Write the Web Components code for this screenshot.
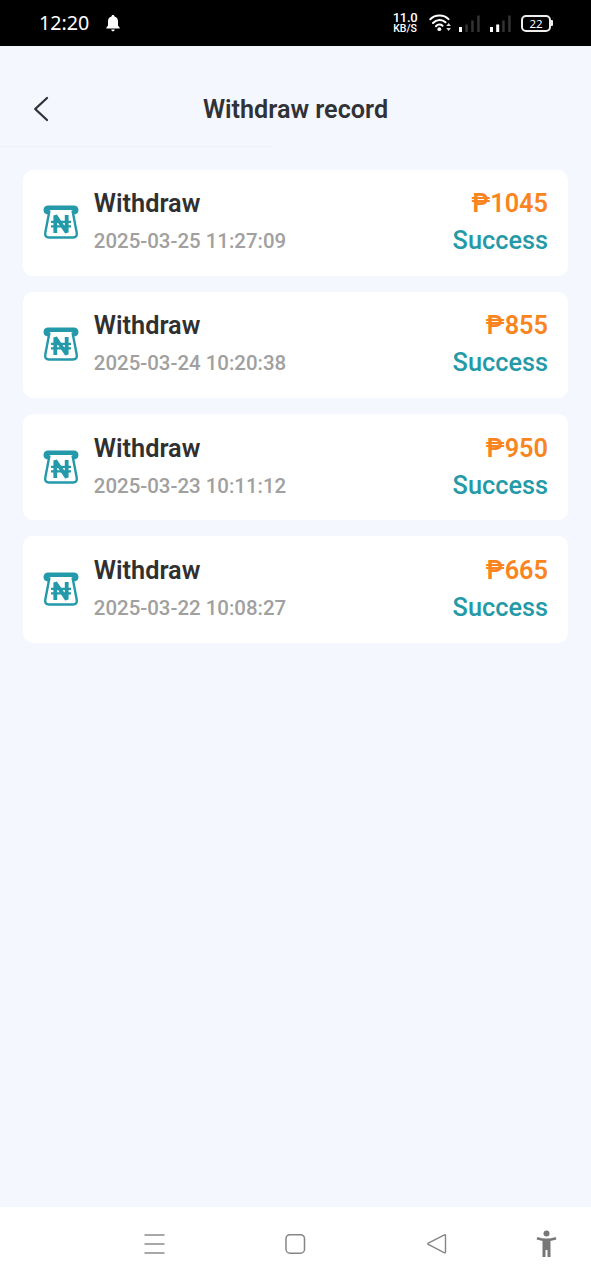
<!DOCTYPE html>
<html lang="en">
<head>
<meta charset="utf-8">
<title>Withdraw record</title>
<style>
html, body { margin: 0; height: 100%; }
body { background: #f4f7fe; font-family: Roboto, "Noto Sans", sans-serif; overflow: hidden; }
</style>
</head>
<body>
<withdraw-app></withdraw-app>
<script>
function define(name, html, setup) {
  const template = document.createElement('template');
  template.innerHTML = html;
  customElements.define(name, class extends HTMLElement {
    constructor() {
      super();
      this.attachShadow({ mode: 'open' }).append(template.content.cloneNode(true));
    }
    connectedCallback() { if (setup) setup(this.shadowRoot, this); }
  });
}

define('status-bar', `
<style>
:host { display: flex; align-items: center; box-sizing: border-box; height: 46px; background: #000; color: #fff; padding: 0 38px 0 39px; }
.time { font: 400 19.700px/24px "Noto Sans", sans-serif; width: 67px; white-space: nowrap; }
.spacer { flex: 1; }
.speed { display: grid; grid-template-rows: 12px 10px; justify-items: center; width: 26px; font-weight: 500; white-space: nowrap; }
.rate { font-size: 13px; line-height: 12px; letter-spacing: -.3px; }
.unit { font-size: 10.500px; line-height: 10px; }
svg { display: block; flex: none; }
.wifi { margin-left: 11px; }
.signal { margin-left: 7px; }
.signal + .signal { margin-left: 9px; }
.battery { margin-left: 9px; box-sizing: border-box; width: 30px; height: 17px; border: 2px solid #eee; border-radius: 5px; font: 400 11.500px/13px "Noto Sans", sans-serif; text-align: center; }
.tip { width: 2px; height: 6px; background: #eee; border-radius: 0 1px 1px 0; }
</style>
<span class="time">12:20</span>
<svg width="14" height="17" viewBox="0 0 14 17"><path fill="#fff" d="M7 0c1 0 1.400.6 1.500 1.400C11 2.100 12 4 12 6.300v4.200l1.700 2.200v.8H.3v-.8L2 10.500V6.300C2 4 3 2.100 5.500 1.400 5.600.6 6 0 7 0ZM5.200 14.500h3.600c-.2 1.200-.8 1.800-1.800 1.800s-1.600-.6-1.800-1.800Z"/></svg>
<span class="spacer"></span>
<div class="speed"><div class="rate">11.0</div><div class="unit">KB/S</div></div>
<svg class="wifi" width="23" height="18" viewBox="0 0 23 18"><g fill="none" stroke="#fff" stroke-width="2" stroke-linecap="round"><path d="M1.300 5.200C6 .2 15 .2 19.500 5.200M4 9c3.600-3.900 9.200-4 12.500-.8M7 12.200c1.800-1.900 4.700-2.200 6.500-.4"/></g><circle cx="10.300" cy="15.200" r="1.900" fill="#fff"/><path d="m17.300 12 2.300-3 2.300 3ZM17.300 14h4.600l-2.300 3Z" fill="#ddd"/></svg>
<svg class="signal" width="22" height="17" viewBox="0 0 22 17"><path fill="#fff" d="M0 12h3v5H0Z"/><path fill="#333" d="M6.300 9.500h2.500V17H6.300ZM12.200 5.500h2.500V17h-2.500ZM18.200.5h2.500V17h-2.500Z"/></svg>
<svg class="signal" width="22" height="17" viewBox="0 0 22 17"><path fill="#fff" d="M0 12h3v5H0ZM6.200 9.500h3V17h-3Z"/><path fill="#333" d="M12.200 5.500h2.500V17h-2.500ZM18.200.5h2.500V17h-2.500Z"/></svg>
<div class="battery">22</div><i class="tip"></i>`);

define('page-header', `
<style>
:host { display: grid; grid-template-columns: 60px 1fr 60px; grid-template-rows: 74px 1px; align-items: center; box-sizing: border-box; height: 101px; padding-top: 26px; }
h1 { margin: 0; padding-top: 1px; font-size: 25.200px; line-height: 30px; font-weight: 600; color: #303236; text-align: center; white-space: nowrap; }
svg { display: block; margin-left: 33px; }
.rule { grid-column: 1 / -1; width: 272px; height: 1px; background: #edf0f5; }
</style>
<svg width="16" height="26" viewBox="0 0 16 26"><path d="M14 2 2.200 13 14 24" fill="none" stroke="#303139" stroke-width="2.300" stroke-linecap="round" stroke-linejoin="round"/></svg>
<h1><slot></slot></h1>
<i></i>
<div class="rule"></div>`);

define('withdraw-icon', `
<style>:host { display: block; padding-bottom: 1px; } svg { display: block; }</style>
<svg width="36" height="34" viewBox="0 0 36 34">
<path d="M6.500 5.500 2.300 27.500Q1.500 32.500 6 32.500H30Q34.500 32.500 33.700 27.500L29.500 5.500" fill="none" stroke="#2499aa" stroke-width="2.400"/>
<path d="M4.500.5h27a4.500 4.500 0 0 1 1 8.700h-2.200L29.300 5H6.700L5.700 9.200H3.500A4.500 4.500 0 0 1 4.500.5Z" fill="#2499aa"/>
<path d="M12.300 28V10.500L23.700 27.500V10" fill="none" stroke="#2499aa" stroke-width="3.800" stroke-linejoin="bevel"/>
<path d="M8 16.900h20M8 21.300h20" stroke="#2499aa" stroke-width="2.200"/>
</svg>`);

define('record-card', `
<style>
:host { display: grid; grid-template-columns: 51.300px 1fr auto; align-items: center; box-sizing: border-box; height: 106.500px; padding: 0 20px 0 19.500px; background: #fff; border-radius: 10px; }
.title, .amount { font-size: 25.300px; line-height: 32px; font-weight: 600; color: #303030; }
.date { font-size: 20.450px; line-height: 30px; font-weight: 500; color: #a0a0a0; margin-top: 6px; white-space: nowrap; }
.left, .right { padding-bottom: 1px; }
.right { text-align: right; }
.amount { color: #f98420; }
.state { font-size: 25.300px; line-height: 30px; font-weight: 500; color: #2499a7; margin-top: 6px; }
</style>
<withdraw-icon></withdraw-icon>
<div class="left"><div class="title">Withdraw</div><div class="date"></div></div>
<div class="right"><div class="amount"></div><div class="state">Success</div></div>`, (root, host) => {
  root.querySelector('.date').textContent = host.getAttribute('date');
  root.querySelector('.amount').textContent = '₱' + host.getAttribute('amount');
});

define('nav-bar', `
<style>
:host { display: grid; grid-template-columns: 83px 141px 141px 143px 75px; align-items: center; justify-items: center; height: 73px; background: #fff; }
svg { display: block; }
</style>
<i></i>
<svg width="22" height="22" viewBox="0 0 22 22"><path d="M1.500 2h20M1.500 11h20M1.500 20h20" stroke="#8c8c8c" stroke-width="1.600"/></svg>
<svg width="22" height="22" viewBox="0 0 22 22"><rect x="2" y="1.700" width="18.500" height="18.500" rx="4" fill="none" stroke="#858585" stroke-width="1.500"/></svg>
<svg width="22" height="22" viewBox="0 0 22 22"><path d="M18.500 1.800 2.300 10.200q-1 .6 0 1.200l16.200 8.400q1 .4 1-.8V2.600q0-1.200-1-.8Z" fill="none" stroke="#858585" stroke-width="1.400"/></svg>
<svg width="22" height="28" viewBox="0 0 22 28"><circle cx="11.500" cy="3.500" r="3" fill="#777"/><path d="M2 8.300q9.500 3.200 19 0" fill="none" stroke="#777" stroke-width="2.600"/><path d="M7.500 9h8v18h-3v-7h-2v7h-3Z" fill="#777"/></svg>`);

define('withdraw-app', `
<style>
:host { display: flex; flex-direction: column; width: 591px; height: 1280px; }
main { flex: 1; display: flex; flex-direction: column; gap: 15.700px; padding: 22.500px 23px 0; }
</style>
<status-bar></status-bar>
<page-header>Withdraw record</page-header>
<main>
<record-card date="2025-03-25 11:27:09" amount="1045"></record-card>
<record-card date="2025-03-24 10:20:38" amount="855"></record-card>
<record-card date="2025-03-23 10:11:12" amount="950"></record-card>
<record-card date="2025-03-22 10:08:27" amount="665"></record-card>
</main>
<nav-bar></nav-bar>`);
</script>
</body>
</html>
